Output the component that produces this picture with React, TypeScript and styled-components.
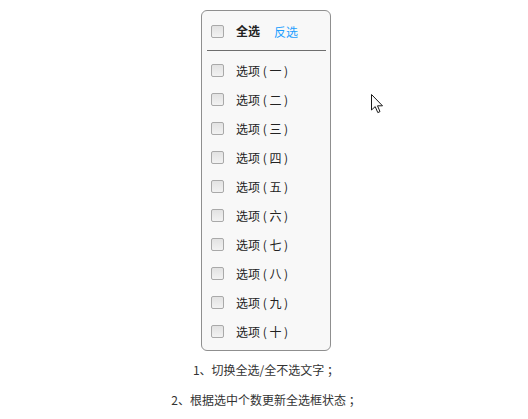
import React, { useState } from "react";
import styled, { createGlobalStyle } from "styled-components";

const Global = createGlobalStyle`
  html, body { margin: 0; padding: 0; background: #fff; }
  body {
    font-family: "Microsoft YaHei", "Noto Sans CJK SC", "Noto Sans", sans-serif;
    font-size: 12px;
    color: #333;
  }
`;

const Page = styled.div`
  position: relative;
  width: 528px;
  height: 419px;
  display: flex;
  flex-direction: column;
  align-items: center;
  padding-left: 4px;
  box-sizing: border-box;
`;

const Box = styled.div`
  margin-top: 10px;
  width: 130px;
  box-sizing: border-box;
  border: 1px solid #8f8f8f;
  border-radius: 6px;
  background: #f8f8f8;
  padding: 6px 0 4px;
`;

const Row = styled.label<{ $h: number }>`
  display: flex;
  align-items: center;
  height: ${(p) => p.$h}px;
  padding-left: 9px;
  cursor: default;
`;

const Check = styled.span<{ $on: boolean }>`
  width: 11px;
  height: 11px;
  flex: none;
  border: 1px solid #a9a9a9;
  border-radius: 2px;
  background: ${(p) =>
    p.$on ? "#3b8ee0" : "linear-gradient(#e2e2e2, #f2f2f2)"};
  margin-right: 12px;
`;

const Label = styled.span<{ $bold?: boolean }>`
  font-weight: ${(p) => (p.$bold ? 700 : 400)};
  color: #222;
  line-height: 16px;
`;

const Invert = styled.span`
  margin-left: 14px;
  color: #1e9fff;
  cursor: pointer;
`;

const Rule = styled.div`
  height: 1px;
  background: #6e6e6e;
  margin: 5px 4px 5px 5px;
`;

const Note = styled.p`
  margin: 0;
  height: 30px;
  line-height: 30px;
  color: #333;
  text-align: center;
`;

const Notes = styled.div`
  margin-top: 4px;
  display: flex;
  flex-direction: column;
  align-items: center;
`;

const Cursor = styled.svg`
  position: absolute;
  left: 371px;
  top: 94px;
`;

const nums = ["一", "二", "三", "四", "五", "六", "七", "八", "九", "十"];

export default function App() {
  const [sel, setSel] = useState<boolean[]>(nums.map(() => false));
  const all = sel.every(Boolean);
  return (
    <Page>
      <Global />
      <Box>
        <Row $h={28} onClick={() => setSel(nums.map(() => !all))}>
          <Check $on={all} />
          <Label $bold>{all ? "全不选" : "全选"}</Label>
          <Invert
            onClick={(e) => {
              e.preventDefault();
              e.stopPropagation();
              setSel(sel.map((v) => !v));
            }}
          >
            反选
          </Invert>
        </Row>
        <Rule />
        {nums.map((n, i) => (
          <Row
            key={n}
            $h={29}
            onClick={() => setSel(sel.map((v, j) => (j === i ? !v : v)))}
          >
            <Check $on={sel[i]} />
            <Label>{`选项 ( ${n} )`}</Label>
          </Row>
        ))}
      </Box>
      <Notes>
        <Note>1、切换全选/全不选文字 ；</Note>
        <Note>2、根据选中个数更新全选框状态 ；</Note>
      </Notes>
      <Cursor width="13" height="20" viewBox="0 0 13 20">
        <path
          d="M0.5 0.5 L0.5 16 L4.2 12.6 L6.8 18.6 L9 17.6 L6.5 11.8 L11.5 11.8 Z"
          fill="#fff"
          stroke="#1a1a1a"
          strokeWidth="1"
          strokeLinejoin="miter"
        />
      </Cursor>
    </Page>
  );
}
